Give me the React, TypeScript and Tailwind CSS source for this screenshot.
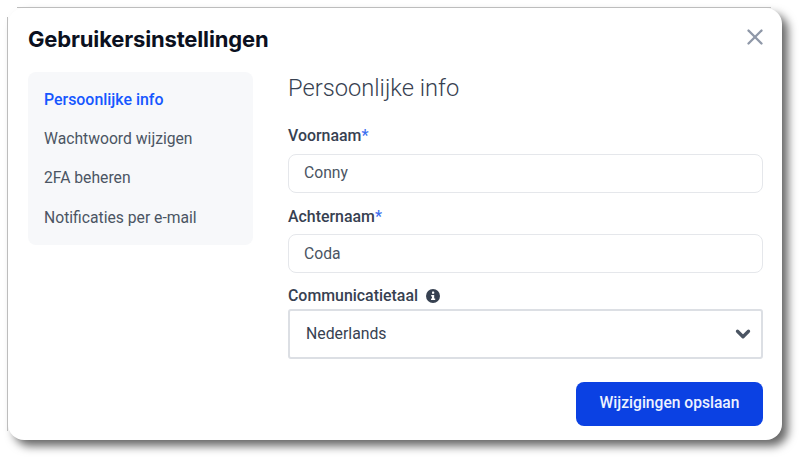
import React from 'react'
import { ChevronDown, X } from 'lucide-react'

const NAV_ITEMS = [
  { label: 'Persoonlijke info', active: true },
  { label: 'Wachtwoord wijzigen', active: false },
  { label: '2FA beheren', active: false },
  { label: 'Notificaties per e-mail', active: false },
]

export default function App() {
  return (
    <div className="h-[464px] w-[806px] overflow-hidden bg-white pt-[8px] pl-[8px] font-['Roboto',sans-serif]">
      <div className="relative h-[432px] w-[774px] rounded-2xl bg-white pt-[15px] pr-[19px] pl-[20px] shadow-[6px_6px_10px_rgba(0,0,0,0.6)]">
        {/* dunne randlijnen boven en links */}
        <span className="absolute top-[-1px] left-[9px] h-px w-[754px] bg-[#bdbdbd]" />
        <span className="absolute top-[9px] left-[-1px] h-[414px] w-px bg-[#bdbdbd]" />

        <h1 className="h-[32px] font-['Inter',sans-serif] text-[22px] leading-[32px] font-bold tracking-[-0.16px] text-[#0b1020]">
          Gebruikersinstellingen
        </h1>
        <button className="absolute top-[15.5px] right-[14.5px] text-[#8f98a8]">
          <X size={26} strokeWidth={2.2} />
        </button>

        <div className="mt-[17px] flex">
          {/* Zijmenu */}
          <nav className="flex h-[173px] w-[225px] shrink-0 flex-col rounded-lg bg-[#f7f8fa] px-[16px] pt-[8px]">
            {NAV_ITEMS.map((item) => (
              <a
                key={item.label}
                className={`flex h-[39.3px] items-center ${
                  item.active ? 'text-[15.9px] font-medium text-[#1657ff]' : 'text-[15.7px] text-[#4b5563]'
                }`}
              >
                {item.label}
              </a>
            ))}
          </nav>

          {/* Formulier */}
          <div className="ml-[35px] flex w-[475px] flex-col">
            <h2 className="h-[32px] text-[23.7px] leading-[32px] font-light text-[#374151]">
              Persoonlijke info
            </h2>
            <label className="mt-[20px] h-[24px] text-[15.9px] leading-[24px] font-medium text-[#374151]">
              Voornaam<span className="text-[#3b6ff0]">*</span>
            </label>
            <div className="mt-[6px] flex h-[39px] items-center rounded-lg border border-[#e5e7eb] bg-white px-[15px] pb-[2px] text-[15.7px] text-[#4b5563]">
              Conny
            </div>
            <label className="mt-[12px] h-[24px] text-[15.9px] leading-[24px] font-medium text-[#374151]">
              Achternaam<span className="text-[#3b6ff0]">*</span>
            </label>
            <div className="mt-[5px] flex h-[39px] items-center rounded-lg border border-[#e5e7eb] bg-white px-[15px] text-[15.7px] text-[#4b5563]">
              Coda
            </div>
            <div className="mt-[11px] flex items-center gap-[8px]">
              <span className="text-[15.9px] leading-[24px] font-medium text-[#374151]">Communicatietaal</span>
              <svg width="14" height="14" viewBox="0 0 14 14">
                <circle cx="7" cy="7" r="7" fill="#374151" />
                <rect x="6" y="2.6" width="2.2" height="2.2" rx="0.6" fill="#fff" />
                <path d="M5.2 6h3v3.6h1v1.4H5v-1.4h1V7.4h-.8z" fill="#fff" />
              </svg>
            </div>
            <div className="mt-[1px] flex h-[50px] items-center justify-between rounded-[3px] border-2 border-[#dcdfe4] bg-white pr-[7.5px] pl-[16px] text-[15.8px] text-[#374151]">
              Nederlands
              <ChevronDown size={22} strokeWidth={3.6} className="text-[#4b5563]" />
            </div>
            <div className="mt-[23px] flex justify-end">
              <button className="h-[44px] w-[187px] rounded-lg bg-[#0b41e3] text-[15.6px] font-medium text-[#eef2ff]">
                Wijzigingen opslaan
              </button>
            </div>
          </div>
        </div>
      </div>
    </div>
  )
}
